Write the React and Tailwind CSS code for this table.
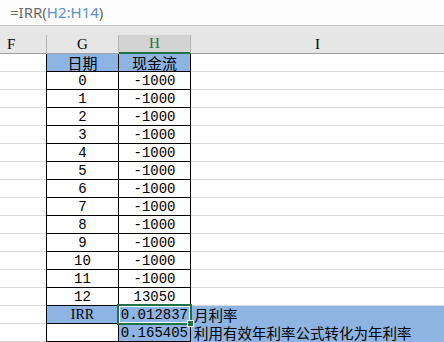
import React from 'react';

const mono = "font-['Liberation_Mono','Noto_Sans_CJK_SC',monospace]";
const serif = "font-['Liberation_Serif',serif]";
const cjk = "font-['Noto_Sans_CJK_SC',sans-serif]";

const flows = [
  ['0', '-1000'],
  ['1', '-1000'],
  ['2', '-1000'],
  ['3', '-1000'],
  ['4', '-1000'],
  ['5', '-1000'],
  ['6', '-1000'],
  ['7', '-1000'],
  ['8', '-1000'],
  ['9', '-1000'],
  ['10', '-1000'],
  ['11', '-1000'],
  ['12', '13050'],
];

function Row({ g, h, i, gBlue, hBlue, iBlue, hRight, gCjk, gFont }) {
  return (
    <div className="flex h-[18px] leading-none">
      <div className="w-[46px] h-full border-b border-[#d9d9d9]" />
      <div
        className={`w-[72px] h-full border-l border-b border-black flex items-center justify-center ${
          gCjk ? cjk + ' text-[15px]' : (gFont || mono) + ' text-[14px]'
        } ${gBlue ? 'bg-[#8db4e2]' : 'bg-white'}`}
      >
        {g}
      </div>
      <div
        className={`w-[73px] h-full border-l border-r border-b border-black flex items-center ${
          hRight ? 'justify-end pr-[2px]' : 'justify-center'
        } ${gCjk ? cjk + ' text-[15px]' : mono + ' text-[14px]'} ${hBlue ? 'bg-[#8db4e2]' : 'bg-white'}`}
      >
        {h}
      </div>
      <div
        className={`flex-1 h-full flex items-center pl-[3px] text-[14.5px] whitespace-nowrap ${cjk} ${
          iBlue ? 'bg-[#8db4e2]' : 'border-b border-[#d9d9d9]'
        }`}
      >
        {i}
      </div>
    </div>
  );
}

export default function App() {
  return (
    <div className="w-[444px] h-[342px] overflow-hidden bg-white relative text-black">
      {/* formula bar */}
      <div className="h-[25px] bg-[#fdfdfd] flex items-center pl-[10px] text-[15px] text-[#6b6b6b] font-['Noto_Sans',sans-serif]">
        =IRR(<span className="text-[#5a8fcf]">H2:H14</span>)
      </div>
      <div className="h-[10px] border-t border-[#c6c6c6] bg-[#e6e6e6]" />

      {/* column headers */}
      <div className={`flex h-[19px] bg-[#e6e6e6] text-[15px] ${serif}`}>
        <div className="w-[47px] h-full border-r border-r-[#b4b4b4] border-b border-b-[#9f9f9f] flex items-center pl-[7px]">F</div>
        <div className="w-[72px] h-full border-r border-r-[#b4b4b4] border-b border-b-[#9f9f9f] flex items-center justify-center">G</div>
        <div className="w-[72px] h-full bg-[#d3d3d3] border-r border-r-[#b4b4b4] border-b-2 border-b-[#217346] flex items-center justify-center text-[#217346]">H</div>
        <div className="flex-1 h-full border-b border-b-[#9f9f9f] flex items-center justify-center">I</div>
      </div>

      <Row g="日期" h="现金流" gBlue hBlue gCjk />
      {flows.map(([g, h]) => (
        <Row key={g} g={g} h={h} />
      ))}
      <Row g="IRR" h="0.012837" i="月利率" gBlue hBlue iBlue hRight gFont={serif} />
      <Row g="" h="0.165405" i="利用有效年利率公式转化为年利率" hBlue iBlue hRight />

      {/* active cell selection */}
      <div className="absolute left-[117px] top-[304px] w-[75px] h-[21px] border-2 border-[#217346] pointer-events-none">
        <div className="w-full h-full border border-white" />
      </div>
      <div className="absolute left-[187px] top-[320px] w-[7px] h-[7px] bg-[#217346] border border-white" />
    </div>
  );
}
